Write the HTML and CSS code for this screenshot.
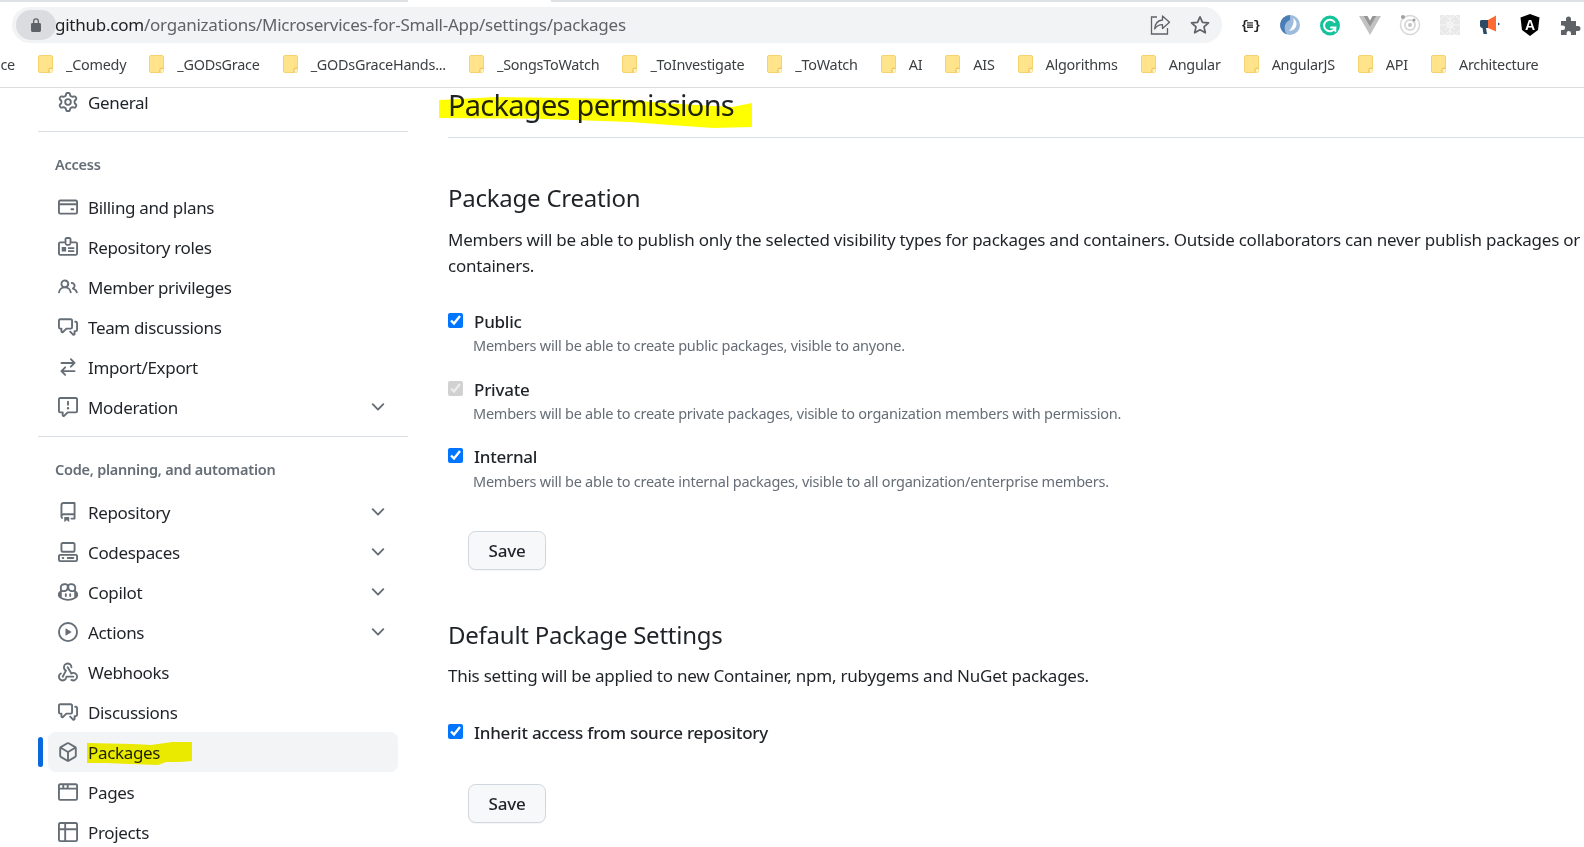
FILE: index.html
```html
<!DOCTYPE html>
<html lang="en">
<head>
  <meta charset="UTF-8">
  <title>Packages permissions</title>
  <link rel="stylesheet" href="styles.css">
</head>
<body>

  <svg class="sprite" xmlns="http://www.w3.org/2000/svg">
    <symbol id="i-gear" viewBox="0 0 16 16"><path d="M8 0a8.2 8.2 0 0 1 .701.031C9.444.095 9.99.645 10.16 1.29l.288 1.107c.018.066.079.158.212.224.231.114.454.243.668.386.123.082.233.09.299.071l1.103-.303c.644-.176 1.392.021 1.82.63.27.385.506.792.704 1.218.315.675.111 1.422-.364 1.891l-.814.806c-.049.048-.098.147-.088.294.016.257.016.515 0 .772-.01.147.038.246.088.294l.814.806c.475.469.679 1.216.364 1.891a7.977 7.977 0 0 1-.704 1.217c-.428.61-1.176.807-1.82.63l-1.102-.302c-.067-.019-.177-.011-.3.071a5.909 5.909 0 0 1-.668.386c-.133.066-.194.158-.211.224l-.29 1.106c-.168.646-.715 1.196-1.458 1.26a8.006 8.006 0 0 1-1.402 0c-.743-.064-1.289-.614-1.458-1.26l-.289-1.106c-.018-.066-.079-.158-.212-.224a5.738 5.738 0 0 1-.668-.386c-.123-.082-.233-.09-.299-.071l-1.103.303c-.644.176-1.392-.021-1.82-.63a8.12 8.12 0 0 1-.704-1.218c-.315-.675-.111-1.422.363-1.891l.815-.806c.05-.048.098-.147.088-.294a6.214 6.214 0 0 1 0-.772c.01-.147-.038-.246-.088-.294l-.815-.806C.635 6.045.431 5.298.746 4.623a7.92 7.92 0 0 1 .704-1.217c.428-.61 1.176-.807 1.82-.63l1.102.302c.067.019.177.011.3-.071.214-.143.437-.272.668-.386.133-.066.194-.158.211-.224l.29-1.106C6.009.645 6.556.095 7.299.03 7.53.01 7.764 0 8 0Zm-.571 1.525c-.036.003-.108.036-.137.146l-.289 1.105c-.147.561-.549.967-.998 1.189-.173.086-.34.183-.5.29-.417.278-.97.423-1.529.27l-1.103-.303c-.109-.03-.175.016-.195.045-.22.312-.412.644-.573.99-.014.031-.021.11.059.19l.815.806c.411.406.562.957.53 1.456a4.709 4.709 0 0 0 0 .582c.032.499-.119 1.05-.53 1.456l-.815.806c-.081.08-.073.159-.059.19.162.346.353.677.573.989.02.03.085.076.195.046l1.102-.303c.56-.153 1.113-.008 1.53.27.161.107.328.204.501.29.447.222.85.629.997 1.189l.289 1.105c.029.109.101.143.137.146a6.6 6.6 0 0 0 1.142 0c.036-.003.108-.036.137-.146l.289-1.105c.147-.561.549-.967.998-1.189.173-.086.34-.183.5-.29.417-.278.97-.423 1.529-.27l1.103.303c.109.029.175-.016.195-.045.22-.313.411-.644.573-.99.014-.031.021-.11-.059-.19l-.815-.806c-.411-.406-.562-.957-.53-1.456a4.709 4.709 0 0 0 0-.582c-.032-.499.119-1.05.53-1.456l.815-.806c.081-.08.073-.159.059-.19a6.464 6.464 0 0 0-.573-.989c-.02-.03-.085-.076-.195-.046l-1.102.303c-.56.153-1.113.008-1.53-.27a4.44 4.44 0 0 0-.501-.29c-.447-.222-.85-.629-.997-1.189l-.289-1.105c-.029-.11-.101-.143-.137-.146a6.6 6.6 0 0 0-1.142 0ZM11 8a3 3 0 1 1-6 0 3 3 0 0 1 6 0ZM9.5 8a1.5 1.5 0 1 0-3.001.001A1.5 1.5 0 0 0 9.5 8Z"/></symbol>
    <symbol id="i-card" viewBox="0 0 16 16"><path d="M10.75 9a.75.75 0 0 0 0 1.5h1.5a.75.75 0 0 0 0-1.5h-1.5Z"/><path d="M0 3.75C0 2.784.784 2 1.75 2h12.5c.966 0 1.75.784 1.75 1.75v8.5A1.75 1.75 0 0 1 14.25 14H1.75A1.75 1.75 0 0 1 0 12.25ZM14.5 6.5h-13v5.75c0 .138.112.25.25.25h12.5a.25.25 0 0 0 .25-.25Zm0-2.75a.25.25 0 0 0-.25-.25H1.75a.25.25 0 0 0-.25.25V5h13Z"/></symbol>
    <symbol id="i-badge" viewBox="0 0 16 16"><path fill-rule="evenodd" d="M1.75 3.5h3.5V1.75C5.25.78 6.03 0 7 0h2c.97 0 1.75.78 1.75 1.75V3.5h3.5c.97 0 1.75.78 1.75 1.75v8c0 .97-.78 1.75-1.75 1.75H1.75C.78 15 0 14.22 0 13.25v-8C0 4.28.78 3.5 1.75 3.5ZM6.75 1.75v3.5c0 .14.11.25.25.25h2c.14 0 .25-.11.25-.25v-3.5c0-.14-.11-.25-.25-.25H7c-.14 0-.25.11-.25.25ZM1.75 5c-.14 0-.25.11-.25.25v8c0 .14.11.25.25.25h12.5c.14 0 .25-.11.25-.25v-8c0-.14-.11-.25-.25-.25h-3.6C10.4 6.2 9.7 7 9 7H7c-.7 0-1.4-.8-1.65-2Z"/><path d="M3 8h3.5v3.5H3ZM8 8.25h5v1.4H8ZM8 10.6h5V12H8Z"/></symbol>
    <symbol id="i-people" viewBox="0 0 16 16"><path d="M2 5.5a3.5 3.5 0 1 1 5.898 2.549 5.508 5.508 0 0 1 3.034 4.084.75.75 0 1 1-1.482.235 4 4 0 0 0-7.9 0 .75.75 0 0 1-1.482-.236A5.507 5.507 0 0 1 3.102 8.05 3.493 3.493 0 0 1 2 5.5ZM11 4a3.001 3.001 0 0 1 2.22 5.018 5.01 5.01 0 0 1 2.56 3.012.749.749 0 0 1-.885.954.752.752 0 0 1-.549-.514 3.507 3.507 0 0 0-2.522-2.372.75.75 0 0 1-.574-.73v-.352a.75.75 0 0 1 .416-.672A1.5 1.5 0 0 0 11 5.5.75.75 0 0 1 11 4Zm-5.5-.5a2 2 0 1 0-.001 3.999A2 2 0 0 0 5.5 3.5Z"/></symbol>
    <symbol id="i-discuss" viewBox="0 0 16 16"><path d="M1.75 1h8.5c.966 0 1.75.784 1.75 1.75v5.5A1.75 1.75 0 0 1 10.25 10H7.061l-2.574 2.573A1.458 1.458 0 0 1 2 11.543V10h-.25A1.75 1.75 0 0 1 0 8.25v-5.5C0 1.784.784 1 1.75 1ZM1.5 2.75v5.5c0 .138.112.25.25.25h1a.75.75 0 0 1 .75.75v2.19l2.72-2.72a.749.749 0 0 1 .53-.22h3.5a.25.25 0 0 0 .25-.25v-5.5a.25.25 0 0 0-.25-.25h-8.5a.25.25 0 0 0-.25.25Zm13 2a.25.25 0 0 0-.25-.25h-.5a.75.75 0 0 1 0-1.5h.5c.966 0 1.75.784 1.75 1.75v5.5A1.75 1.75 0 0 1 14.25 12H14v1.543a1.458 1.458 0 0 1-2.487 1.03L9.22 12.28a.749.749 0 0 1 .326-1.275.749.749 0 0 1 .734.215l2.22 2.22v-2.19a.75.75 0 0 1 .75-.75h1a.25.25 0 0 0 .25-.25Z"/></symbol>
    <symbol id="i-switch" viewBox="0 0 16 16"><path d="M5.22 14.78a.75.75 0 0 0 1.06-1.06L4.56 12h8.69a.75.75 0 0 0 0-1.5H4.56l1.72-1.72a.75.75 0 0 0-1.06-1.06l-3 3a.75.75 0 0 0 0 1.06l3 3Zm5.56-6.5a.75.75 0 1 1-1.06-1.06l1.72-1.72H2.75a.75.75 0 0 1 0-1.5h8.69L9.72 2.28a.75.75 0 0 1 1.06-1.06l3 3a.75.75 0 0 1 0 1.06l-3 3Z"/></symbol>
    <symbol id="i-report" viewBox="0 0 16 16"><path d="M0 1.75C0 .784.784 0 1.75 0h12.5C15.216 0 16 .784 16 1.75v9.5A1.75 1.75 0 0 1 14.25 13H8.06l-2.573 2.573A1.458 1.458 0 0 1 3 14.543V13H1.75A1.75 1.75 0 0 1 0 11.25Zm1.75-.25a.25.25 0 0 0-.25.25v9.5c0 .138.112.25.25.25h2a.75.75 0 0 1 .75.75v2.19l2.72-2.72a.749.749 0 0 1 .53-.22h6.5a.25.25 0 0 0 .25-.25v-9.5a.25.25 0 0 0-.25-.25Zm7 2.25v2.5a.75.75 0 0 1-1.5 0v-2.5a.75.75 0 0 1 1.5 0ZM9 9a1 1 0 1 1-2 0 1 1 0 0 1 2 0Z"/></symbol>
    <symbol id="i-repo" viewBox="0 0 16 16"><path d="M2 2.5A2.5 2.5 0 0 1 4.5 0h8.75a.75.75 0 0 1 .75.75v12.5a.75.75 0 0 1-.75.75h-2.5a.75.75 0 0 1 0-1.5h1.75v-2h-8a1 1 0 0 0-.714 1.7.75.75 0 1 1-1.072 1.05A2.495 2.495 0 0 1 2 11.5Zm10.5-1h-8a1 1 0 0 0-1 1v6.708A2.486 2.486 0 0 1 4.5 9h8ZM5 12.25a.25.25 0 0 1 .25-.25h3.5a.25.25 0 0 1 .25.25v3.25a.25.25 0 0 1-.4.2l-1.45-1.087a.249.249 0 0 0-.3 0L5.4 15.7a.25.25 0 0 1-.4-.2Z"/></symbol>
    <symbol id="i-codespaces" viewBox="0 0 16 16"><path d="M0 11.25c0-.966.784-1.75 1.75-1.75h12.5c.966 0 1.75.784 1.75 1.75v3A1.75 1.75 0 0 1 14.25 16H1.75A1.75 1.75 0 0 1 0 14.25Zm2-9.5C2 .784 2.784 0 3.75 0h8.5C13.216 0 14 .784 14 1.75v5a1.75 1.75 0 0 1-1.75 1.75h-8.5A1.75 1.75 0 0 1 2 6.75Zm1.75-.25a.25.25 0 0 0-.25.25v5c0 .138.112.25.25.25h8.5a.25.25 0 0 0 .25-.25v-5a.25.25 0 0 0-.25-.25Zm-2 9.5a.25.25 0 0 0-.25.25v3c0 .138.112.25.25.25h12.5a.25.25 0 0 0 .25-.25v-3a.25.25 0 0 0-.25-.25Z"/><path d="M7 12.75a.75.75 0 0 1 .75-.75h4.5a.75.75 0 0 1 0 1.5h-4.5a.75.75 0 0 1-.75-.75Zm-4 0a.75.75 0 0 1 .75-.75h.5a.75.75 0 0 1 0 1.5h-.5a.75.75 0 0 1-.75-.75Z"/></symbol>
    <symbol id="i-copilot" viewBox="0 0 16 16"><path d="M7.998 15.035c-4.562 0-7.873-2.914-7.998-3.749V9.338c.085-.628.677-1.686 1.588-2.065.013-.07.024-.143.036-.218.029-.183.06-.384.126-.612-.201-.508-.254-1.084-.254-1.656 0-.87.128-1.769.693-2.484.579-.733 1.494-1.124 2.724-1.261 1.206-.134 2.262.034 2.944.765.05.053.096.108.139.165.044-.057.094-.112.143-.165.682-.731 1.738-.899 2.944-.765 1.23.137 2.145.528 2.724 1.261.566.715.693 1.614.693 2.484 0 .572-.053 1.148-.254 1.656.066.228.098.429.126.612.012.076.024.148.037.218.924.385 1.522 1.471 1.591 2.095v1.872c0 .766-3.351 3.795-8.002 3.795Zm0-1.485c2.28 0 4.584-1.11 5.002-1.433V7.862l-.023-.116c-.49.21-1.075.291-1.727.291-1.146 0-2.059-.327-2.71-.991A3.222 3.222 0 0 1 8 6.303a3.24 3.24 0 0 1-.544.743c-.65.664-1.563.991-2.71.991-.652 0-1.236-.081-1.727-.291l-.023.116v4.255c.419.323 2.722 1.433 5.002 1.433ZM6.762 2.83c-.193-.206-.637-.413-1.682-.297-1.019.113-1.479.404-1.713.7-.247.312-.369.789-.369 1.554 0 .793.129 1.171.308 1.371.162.181.519.379 1.442.379.853 0 1.339-.235 1.638-.54.315-.322.527-.827.617-1.553.117-.935-.037-1.395-.241-1.614Zm4.155-.297c-1.044-.116-1.488.091-1.681.297-.204.219-.359.679-.242 1.614.091.726.303 1.231.618 1.553.299.305.784.54 1.638.54.922 0 1.28-.198 1.442-.379.179-.2.308-.578.308-1.371 0-.765-.123-1.242-.37-1.554-.233-.296-.693-.587-1.713-.7Z"/><path d="M6.25 9.037a.75.75 0 0 1 .75.75v1.501a.75.75 0 0 1-1.5 0V9.787a.75.75 0 0 1 .75-.75Zm4.25.75v1.501a.75.75 0 0 1-1.5 0V9.787a.75.75 0 0 1 1.5 0Z"/></symbol>
    <symbol id="i-play" viewBox="0 0 16 16"><path d="M8 0a8 8 0 1 1 0 16A8 8 0 0 1 8 0ZM1.5 8a6.5 6.5 0 1 0 13 0 6.5 6.5 0 0 0-13 0Zm4.879-2.773 4.264 2.559a.25.25 0 0 1 0 .428l-4.264 2.559A.25.25 0 0 1 6 10.559V5.442a.25.25 0 0 1 .379-.215Z"/></symbol>
    <symbol id="i-webhook" viewBox="0 0 16 16"><path d="M5.5 4.25a2.25 2.25 0 0 1 4.5 0 .75.75 0 0 0 1.5 0 3.75 3.75 0 1 0-6.14 2.889l-2.272 4.258a.75.75 0 0 0 1.324.706L7 7.25a.75.75 0 0 0-.309-1.015A2.25 2.25 0 0 1 5.5 4.25Z"/><path d="M7.364 3.607a.75.75 0 0 1 1.03.257l2.608 4.349a3.75 3.75 0 1 1-.628 6.785.75.75 0 0 1 .752-1.299 2.25 2.25 0 1 0-.033-3.88.75.75 0 0 1-1.03-.256L7.107 4.636a.75.75 0 0 1 .257-1.03Z"/><path d="M2.9 8.776A.75.75 0 0 1 2.625 9.8 2.25 2.25 0 1 0 6 11.75a.75.75 0 0 1 .75-.751h5.5a.75.75 0 0 1 0 1.5H7.425a3.751 3.751 0 1 1-5.55-3.998.75.75 0 0 1 1.024.274Z"/></symbol>
    <symbol id="i-package" viewBox="0 0 16 16"><path d="m8.878.392 5.25 3.045c.54.314.872.89.872 1.514v6.098a1.75 1.75 0 0 1-.872 1.514l-5.25 3.045a1.75 1.75 0 0 1-1.756 0l-5.25-3.045A1.75 1.75 0 0 1 1 11.049V4.951c0-.624.332-1.201.872-1.514L7.122.392a1.75 1.75 0 0 1 1.756 0ZM7.875 1.69l-4.63 2.685L8 7.133l4.755-2.758-4.63-2.685a.248.248 0 0 0-.25 0ZM2.5 5.677v5.372c0 .09.047.171.125.216l4.625 2.683V8.432Zm6.25 8.271 4.625-2.683a.25.25 0 0 0 .125-.216V5.677L8.75 8.432Z"/></symbol>
    <symbol id="i-browser" viewBox="0 0 16 16"><path d="M0 2.75C0 1.784.784 1 1.75 1h12.5c.966 0 1.75.784 1.75 1.75v10.5A1.75 1.75 0 0 1 14.25 15H1.75A1.75 1.75 0 0 1 0 13.25ZM14.5 6h-13v7.25c0 .138.112.25.25.25h12.5a.25.25 0 0 0 .25-.25Zm-6-3.5v2h6v-1.75a.25.25 0 0 0-.25-.25ZM5 2.5v2h2v-2Zm-3.25 0a.25.25 0 0 0-.25.25V4.5h2v-2Z"/></symbol>
    <symbol id="i-table" viewBox="0 0 16 16"><path d="M0 1.75C0 .784.784 0 1.75 0h12.5C15.216 0 16 .784 16 1.75v12.5A1.75 1.75 0 0 1 14.25 16H1.75A1.75 1.75 0 0 1 0 14.25ZM6.5 6.5v8h7.75a.25.25 0 0 0 .25-.25V6.5Zm8-1.5V1.75a.25.25 0 0 0-.25-.25H6.5V5Zm-13 1.5v7.75c0 .138.112.25.25.25H5v-8ZM5 5V1.5H1.75a.25.25 0 0 0-.25.25V5Z"/></symbol>
    <symbol id="i-chevron" viewBox="0 0 16 16"><path d="M12.78 5.22a.749.749 0 0 1 0 1.06l-4.25 4.25a.749.749 0 0 1-1.06 0L3.22 6.28a.749.749 0 1 1 1.06-1.06L8 8.939l3.72-3.719a.749.749 0 0 1 1.06 0Z"/></symbol>
    <symbol id="i-folder" viewBox="0 0 15 18"><rect x=".5" y=".5" width="14" height="17" rx="1.5" fill="#ffe48c" stroke="#f4d36f"/><path fill="#fff3c4" d="M11 17.500v-3.200c0-.6.4-1 1-1h2.500v3c0 .7-.5 1.200-1.200 1.200Z"/><path fill="none" stroke="#e9bb45" d="M11 17.500v-3.200c0-.6.4-1 1-1h2.500"/></symbol>
  </svg>

  <div class="tabstrip">
    <span class="tab-edge left"></span>
    <span class="tab-edge right"></span>
  </div>

  <div class="toolbar">
    <div class="omnibox">
      <span class="lock">
        <svg width="14" height="16" viewBox="0 0 14 16"><path fill="#5f6368" d="M4 6V4.200a3 3 0 0 1 6 0V6h.6c.8 0 1.400.6 1.400 1.400v6.200c0 .8-.6 1.400-1.400 1.400H3.400c-.8 0-1.400-.6-1.400-1.400V7.400C2 6.600 2.600 6 3.400 6Zm1.300 0h3.400V4.200a1.700 1.700 0 0 0-3.400 0Z"/></svg>
      </span>
      <span class="url"><span class="host">github.com</span>/organizations/Microservices-for-Small-App/settings/packages</span>
      <span class="omni-actions">
        <svg width="22" height="22" viewBox="0 0 22 22" fill="none" stroke="#5f6368" stroke-width="1.300"><path d="M8 3H2.500v17h16v-6"/><path stroke-linejoin="round" d="M13.500 2l7 6.200-7 6.300v-3.800c-3.800 0-6 1.300-7.800 4.300.3-5 3.100-8.600 7.800-9Z"/></svg>
        <svg width="22" height="22" viewBox="0 0 22 22" fill="none" stroke="#5f6368" stroke-width="1.700"><path stroke-linejoin="round" d="M11 2.800l2.500 5.500 6 .6-4.500 4 1.300 5.900L11 15.800l-5.300 3 1.300-5.900-4.500-4 6-.6Z"/></svg>
      </span>
    </div>
    <div class="extensions">
      <svg height="20" viewBox="0 0 20 20"><text class="ext-braces" x="1" y="14">{</text><text class="ext-braces" x="13" y="14">}</text><path fill="#333" d="M7 7.200h6v1.300H7zM7 9.400h6v1.300H7zM7 11.600h6v1.300H7z"/></svg>
      <svg height="22" viewBox="0 0 22 22"><circle cx="11" cy="11" r="10" fill="#9dbbdc"/><path fill="#4a7db6" d="M11 1a10 10 0 0 0-3 19.500C4 16 5 8 11 6Z"/><path fill="#fff" d="M14 4c2 4-1 10-4 13 5 0 8-4 7.500-8C17 7 16 5 14 4Z"/></svg>
      <svg height="21" viewBox="0 0 21 21"><circle cx="10.500" cy="10.500" r="10" fill="#15c39a"/><path fill="none" stroke="#fff" stroke-width="2" stroke-linecap="round" d="M15 7a5.800 5.800 0 1 0 .8 5.500H11.500M15.800 12.500V16"/></svg>
      <svg height="20" viewBox="0 0 22 20"><path fill="#c2c2c2" d="M0 1h4.500L11 12l6.500-11H22L11 20Z"/><path fill="#969696" d="M4.500 1h4L11 5.500 13.500 1h4L11 12Z"/></svg>
      <svg height="22" viewBox="0 0 22 22" fill="none" stroke="#d8d8d8"><circle cx="11" cy="11" r="9.500" stroke-width="1.500"/><circle cx="11" cy="11" r="5" stroke-width="2"/><circle cx="11" cy="11" r="2" fill="#c4c4c4" stroke="none"/><circle cx="4" cy="3" r="2" fill="#a0a0a0" stroke="none"/><circle cx="15" cy="6" r="1.500" fill="#a0a0a0" stroke="none"/></svg>
      <svg height="20" viewBox="0 0 20 20"><rect width="20" height="20" fill="#e9e9e9"/><path fill="none" stroke="#f7f7f7" d="M0 5l5-5 5 5 5-5 5 5M0 15l5 5 5-5 5 5 5-5M0 10h20M10 0v20M5 5l10 10M15 5L5 15"/><circle cx="10" cy="10" r="3" fill="none" stroke="#f7f7f7"/></svg>
      <svg height="20" viewBox="0 0 22 20"><path fill="#ff6b35" d="M9 5l8-4.500v16L9 13Z"/><path fill="#2c4a66" d="M1 6.500C1 5.600 1.600 5 2.500 5H9v8H7l1 6H4.500l-1-6C2 13 1 12 1 10.500Z"/><path fill="#2c4a66" d="M19 7.500l2 1.500-2 1.500Z"/></svg>
      <svg height="22" viewBox="0 0 20 22"><path fill="#000" d="M10 0l9.500 3.400-1.500 12.600L10 22 2 16 .5 3.400Z"/><text class="ext-angular" x="10" y="16">A</text></svg>
      <svg height="20" viewBox="0 0 20 20"><path fill="#5f6368" d="M1 6h5V4a2.500 2.500 0 0 1 5 0v2h5v5h2a2.500 2.500 0 0 1 0 5h-2v4h-5v-1.800a2.200 2.200 0 0 0-4.400 0V20H1v-5h1.800a2.300 2.300 0 0 0 0-4.600H1Z"/></svg>
    </div>
  </div>

  <div class="bookmarks">
    <span class="bookmark-cut">ce</span>
    <a class="bookmark"><svg class="folder"><use href="#i-folder"/></svg>_Comedy</a>
    <a class="bookmark"><svg class="folder"><use href="#i-folder"/></svg>_GODsGrace</a>
    <a class="bookmark"><svg class="folder"><use href="#i-folder"/></svg>_GODsGraceHands...</a>
    <a class="bookmark"><svg class="folder"><use href="#i-folder"/></svg>_SongsToWatch</a>
    <a class="bookmark"><svg class="folder"><use href="#i-folder"/></svg>_ToInvestigate</a>
    <a class="bookmark"><svg class="folder"><use href="#i-folder"/></svg>_ToWatch</a>
    <a class="bookmark"><svg class="folder"><use href="#i-folder"/></svg>AI</a>
    <a class="bookmark"><svg class="folder"><use href="#i-folder"/></svg>AIS</a>
    <a class="bookmark"><svg class="folder"><use href="#i-folder"/></svg>Algorithms</a>
    <a class="bookmark"><svg class="folder"><use href="#i-folder"/></svg>Angular</a>
    <a class="bookmark"><svg class="folder"><use href="#i-folder"/></svg>AngularJS</a>
    <a class="bookmark"><svg class="folder"><use href="#i-folder"/></svg>API</a>
    <a class="bookmark"><svg class="folder"><use href="#i-folder"/></svg>Architecture</a>
  </div>

  <div class="page">
    <nav class="sidebar">
      <a class="nav-item first"><svg class="icon"><use href="#i-gear"/></svg>General</a>
      <hr class="nav-rule">
      <h3 class="nav-heading">Access</h3>
      <a class="nav-item"><svg class="icon"><use href="#i-card"/></svg>Billing and plans</a>
      <a class="nav-item"><svg class="icon"><use href="#i-badge"/></svg>Repository roles</a>
      <a class="nav-item"><svg class="icon"><use href="#i-people"/></svg>Member privileges</a>
      <a class="nav-item"><svg class="icon"><use href="#i-discuss"/></svg>Team discussions</a>
      <a class="nav-item"><svg class="icon"><use href="#i-switch"/></svg>Import/Export</a>
      <a class="nav-item"><svg class="icon"><use href="#i-report"/></svg>Moderation<svg class="icon chevron"><use href="#i-chevron"/></svg></a>
      <hr class="nav-rule second">
      <h3 class="nav-heading">Code, planning, and automation</h3>
      <a class="nav-item"><svg class="icon"><use href="#i-repo"/></svg>Repository<svg class="icon chevron"><use href="#i-chevron"/></svg></a>
      <a class="nav-item"><svg class="icon"><use href="#i-codespaces"/></svg>Codespaces<svg class="icon chevron"><use href="#i-chevron"/></svg></a>
      <a class="nav-item"><svg class="icon"><use href="#i-copilot"/></svg>Copilot<svg class="icon chevron"><use href="#i-chevron"/></svg></a>
      <a class="nav-item"><svg class="icon"><use href="#i-play"/></svg>Actions<svg class="icon chevron"><use href="#i-chevron"/></svg></a>
      <a class="nav-item"><svg class="icon"><use href="#i-webhook"/></svg>Webhooks</a>
      <a class="nav-item"><svg class="icon"><use href="#i-discuss"/></svg>Discussions</a>
      <a class="nav-item active">
        <svg class="icon"><use href="#i-package"/></svg>Packages
        <svg class="marker-yellow" viewBox="0 0 105 23" preserveAspectRatio="none"><path fill="#f5f500" d="M0 1l46 1 18 1 21-3 20 0 0 19-12 1-14 0-8 3-28-1-25-1-18 0Z"/></svg>
      </a>
      <a class="nav-item"><svg class="icon"><use href="#i-browser"/></svg>Pages</a>
      <a class="nav-item"><svg class="icon"><use href="#i-table"/></svg>Projects</a>
    </nav>

    <main class="content">
      <div class="page-head">
        <h1>Packages permissions</h1>
        <svg class="head-yellow" viewBox="0 0 313 34" preserveAspectRatio="none"><path fill="#ffff00" d="M0 5 58 2l66 1 54 1 46 4 69 4 20-4v24l-39 1-43-3-40-3-100-3.500-91-.500Z"/></svg>
      </div>

      <h2>Package Creation</h2>
      <p class="lead">Members will be able to publish only the selected visibility types for packages and containers. Outside collaborators can never publish packages or containers.</p>

      <label class="check first"><input type="checkbox" checked>Public</label>
      <p class="note">Members will be able to create public packages, visible to anyone.</p>
      <label class="check"><input type="checkbox" checked disabled>Private</label>
      <p class="note">Members will be able to create private packages, visible to organization members with permission.</p>
      <label class="check tight"><input type="checkbox" checked>Internal</label>
      <p class="note">Members will be able to create internal packages, visible to all organization/enterprise members.</p>

      <button class="btn">Save</button>

      <h2 class="second">Default Package Settings</h2>
      <p class="lead short">This setting will be applied to new Container, npm, rubygems and NuGet packages.</p>

      <label class="check inherit"><input type="checkbox" checked>Inherit access from source repository</label>

      <button class="btn last">Save</button>
    </main>
  </div>

</body>
</html>
```

FILE: styles.css
```css
html, body {
  height: 100%;
}
body {
  margin: 0;
  height: 847px;
  overflow: hidden;
  background: #fff;
  color: #1f2328;
  font-family: "Noto Sans", "Open Sans", sans-serif;
  letter-spacing: -0.015em;
  display: flex;
  flex-direction: column;
}
.sprite {
  display: none;
}

/* browser chrome */
.tabstrip {
  height: 2px;
  display: flex;
  justify-content: space-between;
  flex: none;
}
.tab-edge {
  background: #dee1e6;
  display: block;
}
.tab-edge.left {
  width: 408px;
}
.tab-edge.right {
  width: 1033px;
}
.toolbar {
  height: 46px;
  flex: none;
  display: flex;
  align-items: center;
  padding: 0 0 0 12px;
}
.omnibox {
  width: 1210px;
  height: 36px;
  margin-top: -1px;
  flex: none;
  border-radius: 18px;
  background: #f1f3f4;
  display: flex;
  align-items: center;
  box-sizing: border-box;
}
.lock {
  width: 40px;
  height: 30px;
  margin-left: 4px;
  flex: none;
  border-radius: 15px;
  background: #dadce0;
  display: flex;
  align-items: center;
  justify-content: center;
}
.url {
  margin-left: -1px;
  font-size: 17px;
  color: #5f6368;
  white-space: nowrap;
}
.host {
  color: #202124;
}
.omni-actions {
  margin-left: auto;
  display: flex;
  gap: 18px;
  padding-right: 11px;
}
.extensions {
  display: flex;
  align-items: center;
  margin-left: 8px;
  flex: none;
}
.extensions svg {
  width: 40px;
  flex: none;
}
.ext-braces {
  font-family: "Liberation Mono", monospace;
  font-size: 13px;
  font-weight: 700;
  fill: #222;
}
.ext-angular {
  font-family: "Liberation Sans", sans-serif;
  font-size: 14px;
  font-weight: 700;
  fill: #fff;
  text-anchor: middle;
}

.bookmarks {
  height: 32px;
  padding-bottom: 7px;
  flex: none;
  display: flex;
  align-items: center;
  gap: 23px;
  border-bottom: 1px solid #dadce0;
  font-size: 14.4px;
  color: #3c4043;
  white-space: nowrap;
  overflow: hidden;
}
.bookmark-cut {
  width: 15px;
  overflow: hidden;
  direction: rtl;
  flex: none;
}
.bookmark {
  display: flex;
  align-items: center;
  gap: 13px;
  flex: none;
}
.folder {
  width: 15px;
  height: 18px;
  flex: none;
}

/* page */
.page {
  flex: 1;
  min-height: 0;
  display: flex;
}
.sidebar {
  width: 370px;
  margin-left: 38px;
  flex: none;
}
.nav-item {
  position: relative;
  height: 40px;
  margin: 0 10px;
  padding: 0 10px;
  display: flex;
  align-items: center;
  gap: 10px;
  font-size: 17px;
  letter-spacing: -0.02em;
  color: #1f2328;
  border-radius: 7.5px;
}
.nav-item.first {
  height: 28px;
}
.nav-item.active {
  background: #f3f4f6;
}
.nav-item.active::before {
  content: "";
  position: absolute;
  left: -10px;
  top: 5px;
  width: 5px;
  height: 30px;
  border-radius: 3px;
  background: #0969da;
}
.icon {
  width: 20px;
  height: 20px;
  flex: none;
  fill: #656d76;
}
.chevron {
  margin-left: auto;
}
.marker-yellow {
  position: absolute;
  left: 39px;
  top: 10px;
  width: 105px;
  height: 23px;
  mix-blend-mode: multiply;
}
.nav-rule {
  margin: 15px 0 0;
  border: 0;
  border-top: 1px solid #d8dee4;
}
.nav-rule.second {
  margin-top: 9px;
}
.nav-heading {
  margin: 21px 0 12px 17px;
  font-size: 14.5px;
  line-height: 22px;
  font-weight: 600;
  color: #656d76;
}

.content {
  flex: 1;
  min-width: 0;
  margin-left: 40px;
}
.page-head {
  position: relative;
  padding-bottom: 14px;
  border-bottom: 1px solid #d8dee4;
}
h1 {
  margin: -1px 0 0;
  font-size: 29px;
  line-height: 36px;
  font-weight: 400;
  letter-spacing: -0.025em;
  position: relative;
  color: #1f2328;
}
.head-yellow {
  position: absolute;
  left: -9px;
  top: 8px;
  width: 313px;
  height: 34px;
  mix-blend-mode: multiply;
}
h2 {
  margin: 44px 0 0;
  font-size: 24px;
  line-height: 32px;
  font-weight: 400;
}
h2.second {
  margin-top: 49px;
}
.lead {
  margin: 13px 0 0;
  font-size: 17px;
  line-height: 26px;
  max-width: 1136px;
}
.lead.short {
  margin-top: 12px;
}
.check {
  display: flex;
  align-items: center;
  margin-top: 21px;
  height: 24px;
  font-size: 17px;
  font-weight: 500;
}
.check.first {
  margin-top: 30px;
}
.check.tight {
  margin-top: 20px;
}
.check.tight + .note {
  margin-top: 2px;
}
.check.inherit {
  margin-top: 31px;
}
.check input {
  width: 15px;
  height: 15px;
  margin: -2px 11px 0 0;
  flex: none;
}
.note {
  margin: 1px 0 0 25px;
  font-size: 14.5px;
  line-height: 22px;
  color: #656d76;
}
.btn {
  display: block;
  margin: 39px 0 0 20px;
  width: 78px;
  height: 39px;
  padding: 0;
  font-family: inherit;
  font-size: 17px;
  font-weight: 500;
  letter-spacing: inherit;
  color: #1f2328;
  background: #f6f8fa;
  border: 1px solid #d0d7de;
  border-radius: 7.5px;
  box-shadow: 0 1px 0 rgba(31, 35, 40, 0.04);
}
.btn.last {
  margin-top: 40px;
}
```
